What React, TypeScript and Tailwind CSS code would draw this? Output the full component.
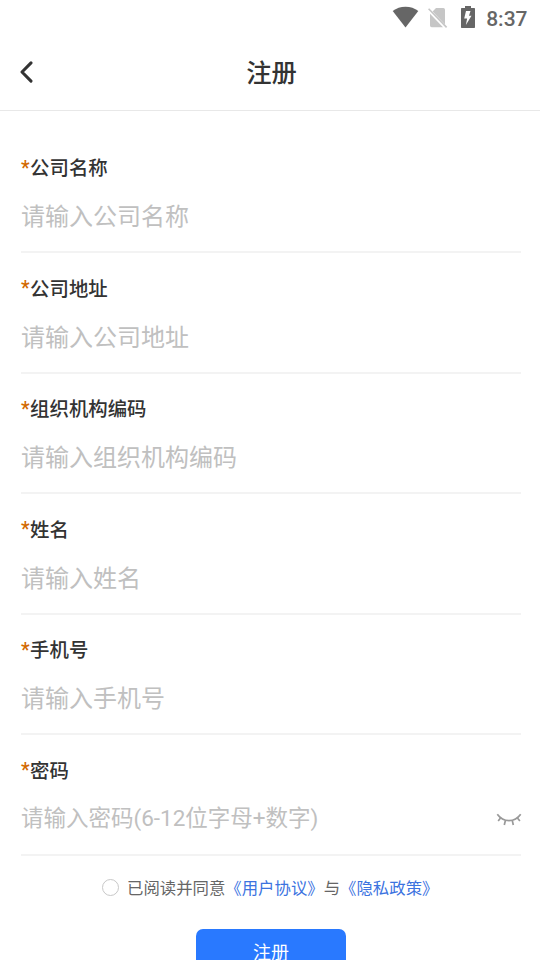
import React from 'react';

type Field = {
  label: string;
  placeholder: string;
  secret?: boolean;
};

const fields: Field[] = [
  { label: '公司名称', placeholder: '请输入公司名称' },
  { label: '公司地址', placeholder: '请输入公司地址' },
  { label: '组织机构编码', placeholder: '请输入组织机构编码' },
  { label: '姓名', placeholder: '请输入姓名' },
  { label: '手机号', placeholder: '请输入手机号' },
  { label: '密码', placeholder: '请输入密码(6-12位字母+数字)', secret: true },
];

function StatusBar() {
  return (
    <div className="flex h-9 items-center justify-end pr-[12.5px] text-[#666666]">
      <svg className="mb-0.5 mr-2" width="28" height="22" viewBox="0 0 28 22" fill="currentColor">
        <path d="M13.5 21.4 0.7 4.9C4.3 2.2 8.6 .7 13.5 .7s9.2 1.5 12.8 4.2Z" />
      </svg>
      <svg className="mr-[13px]" width="20" height="22" viewBox="0 0 20 22" fill="none">
        <path d="M8 1H15.3a1.7 1.7 0 0 1 1.7 1.7v14.8L4.6 4.5ZM2 6.8 15 20.2H3.7A1.7 1.7 0 0 1 2 18.5Z" fill="#c6c6c6" />
        <path d="m.6 1.8 18 18.6" stroke="#c6c6c6" strokeWidth="1.6" />
      </svg>
      <svg className="mb-0.5 mr-[11.5px]" width="14" height="22" viewBox="0 0 14 22">
        <path d="M4 0h6v2h3.3a.7.7 0 0 1 .7.7v18.6a.7.7 0 0 1-.7.7H.7a.7.7 0 0 1-.7-.7V2.7A.7.7 0 0 1 .7 2H4Z" fill="currentColor" />
        <path d="M5 5h4.5L8 9.8h2.5L4.9 19l1.2-6.4H3.2Z" fill="#fff" />
      </svg>
      <span className="pt-0.5 text-[21px] font-medium leading-9">8:37</span>
    </div>
  );
}

function ClosedEye() {
  return (
    <svg className="relative left-px" width="26" height="14" viewBox="0 0 26 14" fill="none" stroke="#999999" strokeWidth="1.7">
      <path d="M1.3 1.3C7.5 9.8 18.5 9.8 24.7 1.3" />
      <path d="M4.5 5 2.2 8M9.4 7.5 8.3 12M16.3 7.6l1 4.4M21.4 5l2.5 3" />
    </svg>
  );
}

function FieldRow({ label, placeholder, secret }: Field) {
  return (
    <div className="flex h-[120.5px] flex-col border-b-2 border-[#f3f3f3] pt-[21.5px]">
      <label className="flex h-[30px] items-center text-[19.4px] font-medium leading-[30px] text-[#333333]">
        <span className="mr-[0.5px] pb-px text-[#d26900]">*</span>
        {label}
      </label>
      <div className="mt-[15px] flex h-[36px] items-center justify-between text-[#c0c0c0]">
        <span className={secret ? '-mt-1 text-[22.5px] leading-9' : 'text-[24px] leading-9'}>{placeholder}</span>
        {secret && <ClosedEye />}
      </div>
    </div>
  );
}

export default function App() {
  return (
    <div className="h-[960px] w-full overflow-hidden bg-white font-['Roboto','Noto_Sans_CJK_SC',sans-serif]">
      <StatusBar />
      <header className="grid h-[75px] grid-cols-[1fr_auto_1fr] items-center border-b border-[#e8e8e8] px-5">
        <svg className="mb-[3px]" width="14" height="22" viewBox="0 0 14 22" fill="none" stroke="#333333" strokeWidth="3" strokeLinecap="round" strokeLinejoin="round">
          <path d="M11 1.9 2 11l9 9.1" />
        </svg>
        <h1 className="pl-[3px] pt-0.5 text-[25.3px] font-medium leading-9 text-[#333333]">注册</h1>
      </header>
      <main className="pl-[21px] pr-[19px] pt-[21.9px]">
        {fields.map((field) => (
          <FieldRow key={field.label} {...field} />
        ))}
      </main>
      <div className="mt-5 flex h-6 items-center pl-[102px] text-[16.4px] leading-6 text-[#666666]">
        <span className="mr-2 size-[17px] rounded-full border border-[#c8c8c8]" />
        <span className="pt-[2px]">
          已阅读并同意<span className="text-[#3c73df]">《用户协议》</span>与
          <span className="text-[#3c73df]">《隐私政策》</span>
        </span>
      </div>
      <button className="ml-[196px] mt-[29px] block h-[48px] w-[150px] rounded-[7px] bg-[#2979ff] text-[18px] leading-[48px] text-white">
        注册
      </button>
    </div>
  );
}
